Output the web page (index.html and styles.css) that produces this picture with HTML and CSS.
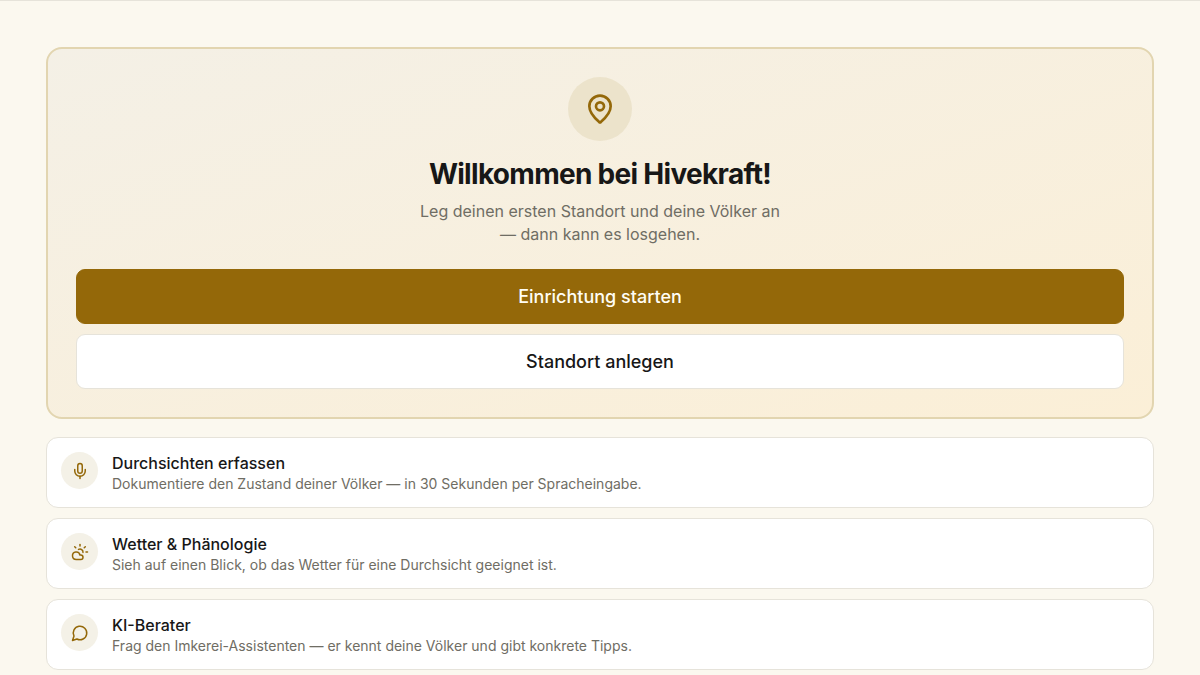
FILE: index.html
```html
<!DOCTYPE html>
<html lang="de">
<head>
<meta charset="utf-8">
<meta name="viewport" content="width=device-width, initial-scale=1">
<title>Hivekraft</title>
<link rel="stylesheet" href="styles.css">
</head>
<body>
<main class="page">
  <section class="welcome">
    <div class="welcome-icon">
      <svg class="icon icon-large" viewBox="0 0 24 24" aria-hidden="true"><path d="M20 10c0 4.993-5.539 10.193-7.399 11.799a1 1 0 0 1-1.202 0C9.539 20.193 4 14.993 4 10a8 8 0 0 1 16 0"/><circle cx="12" cy="10" r="3"/></svg>
    </div>
    <h1 class="welcome-title">Willkommen bei Hivekraft!</h1>
    <p class="welcome-text">Leg deinen ersten Standort und deine Völker an — dann kann es losgehen.</p>
    <div class="actions">
      <button class="button button-primary" type="button">Einrichtung starten</button>
      <button class="button button-outline" type="button">Standort anlegen</button>
    </div>
  </section>
  <ul class="features">
    <li class="feature">
      <span class="feature-icon"><svg class="icon" viewBox="0 0 24 24" aria-hidden="true"><path d="M12 19v3"/><path d="M19 10v2a7 7 0 0 1-14 0v-2"/><rect x="9" y="2" width="6" height="13" rx="3"/></svg></span>
      <div>
        <h2 class="feature-title">Durchsichten erfassen</h2>
        <p class="feature-text">Dokumentiere den Zustand deiner Völker — in 30 Sekunden per Spracheingabe.</p>
      </div>
    </li>
    <li class="feature">
      <span class="feature-icon"><svg class="icon" viewBox="0 0 24 24" aria-hidden="true"><path d="M12 2v2"/><path d="m4.93 4.93 1.41 1.41"/><path d="M20 12h2"/><path d="m19.07 4.93-1.41 1.41"/><path d="M15.947 12.65a4 4 0 0 0-5.925-4.128"/><path d="M13 22H7a5 5 0 1 1 4.9-6H13a3 3 0 0 1 0 6Z"/></svg></span>
      <div>
        <h2 class="feature-title">Wetter &amp; Phänologie</h2>
        <p class="feature-text">Sieh auf einen Blick, ob das Wetter für eine Durchsicht geeignet ist.</p>
      </div>
    </li>
    <li class="feature">
      <span class="feature-icon"><svg class="icon" viewBox="0 0 24 24" aria-hidden="true"><path d="M7.9 20A9 9 0 1 0 4 16.1L2 22Z"/></svg></span>
      <div>
        <h2 class="feature-title">KI-Berater</h2>
        <p class="feature-text">Frag den Imkerei-Assistenten — er kennt deine Völker und gibt konkrete Tipps.</p>
      </div>
    </li>
  </ul>
</main>
</body>
</html>
```
FILE: styles.css
```css
* {
  box-sizing: border-box;
}

body {
  margin: 0;
  background: #fbf8ef;
  color: #171717;
  font-family: Inter, "Liberation Sans", sans-serif;
}

h1,
h2,
p,
ul {
  margin: 0;
  padding: 0;
}

.page {
  display: flex;
  flex-direction: column;
  gap: 18px;
  padding: 46px 46px 0;
  border-top: 1px solid #e6e3da;
}

.welcome {
  display: flex;
  flex-direction: column;
  align-items: center;
  padding: 28px;
  border: 2px solid #e2d5b0;
  border-radius: 16px;
  background: linear-gradient(to bottom right, #f4f0e6, #fbefd7);
  text-align: center;
}

.welcome-icon {
  display: grid;
  place-items: center;
  width: 64px;
  height: 64px;
  margin-bottom: 15px;
  border-radius: 50%;
  background: #ece3cb;
}

.icon {
  width: 18px;
  height: 18px;
  fill: none;
  stroke: #946809;
  stroke-width: 2;
  stroke-linecap: round;
  stroke-linejoin: round;
}

.icon-large {
  width: 32px;
  height: 32px;
}

.welcome-title {
  font-size: 28px;
  font-weight: 700;
  line-height: 36px;
  letter-spacing: -0.025em;
}

.welcome-text {
  max-width: 368px;
  margin-top: 8px;
  color: #6f6d64;
  font-size: 16px;
  line-height: 23px;
}

.actions {
  display: flex;
  flex-direction: column;
  gap: 10px;
  width: 100%;
  margin-top: 23px;
}

.button {
  height: 55px;
  border: 1px solid #e6e3da;
  border-radius: 9px;
  font-family: inherit;
  font-size: 18px;
  font-weight: 500;
}

.button-primary {
  border-color: #946809;
  background: #946809;
  color: #fffdf5;
}

.button-outline {
  background: #fff;
  color: #171717;
}

.features {
  display: flex;
  flex-direction: column;
  gap: 10px;
  list-style: none;
}

.feature {
  display: flex;
  gap: 14px;
  padding: 14px;
  border: 1px solid #e6e3da;
  border-radius: 12px;
  background: #fff;
}

.feature-icon {
  display: grid;
  flex-shrink: 0;
  place-items: center;
  width: 37px;
  height: 37px;
  border-radius: 50%;
  background: #f4f1e7;
}

.feature-title {
  font-size: 16px;
  font-weight: 500;
  line-height: 23px;
}

.feature-text {
  color: #6f6d64;
  font-size: 14px;
  line-height: 18px;
}
```
